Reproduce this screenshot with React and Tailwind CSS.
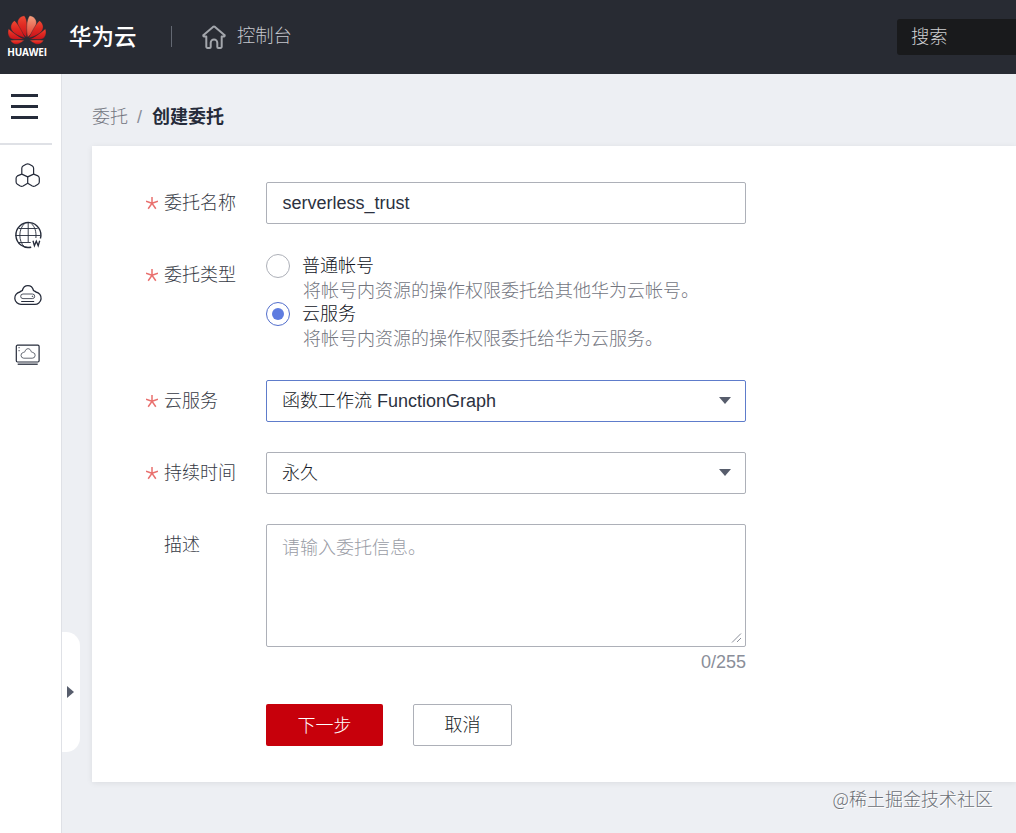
import React from "react";

const PETALS = [
  "M79 112C84 90 83 58 73 47C61 48 51 58 53 71C54 88 67 101 79 112Z",
  "M76 114C67 97 55 72 44 62C33 68 29 82 36 92C43 104 62 110 76 114Z",
  "M74 118C58 112 38 97 26 86C21 98 25 113 36 117C46 120 62 118 74 118Z",
  "M73 121C60 120 44 120 31 121C37 132 46 135 55 132C62 129 68 125 73 121Z",
];

function Logo() {
  return (
    <div className="flex w-[54px] shrink-0 flex-col items-center pt-[15px]">
      <svg width="40" height="30" viewBox="21 45 120 90">
        <defs>
          <linearGradient id="petal" x1="0" y1="0" x2="0" y2="1">
            <stop offset="0" stopColor="#ee4a35" />
            <stop offset="0.45" stopColor="#e02a22" />
            <stop offset="1" stopColor="#c9121b" />
          </linearGradient>
          <linearGradient id="petalLight" x1="0" y1="0" x2="0" y2="1">
            <stop offset="0" stopColor="#f3a080" />
            <stop offset="1" stopColor="#e23a2e" />
          </linearGradient>
        </defs>
        <g fill="url(#petal)" stroke="#282b33" strokeWidth="1.2">
          {PETALS.map((d) => <path key={d} d={d} />)}
        </g>
        <g fill="url(#petal)" stroke="#282b33" strokeWidth="1.2" transform="translate(162 0) scale(-1 1)">
          {PETALS.map((d, i) => <path key={d} d={d} fill={i === 0 ? "url(#petalLight)" : undefined} />)}
        </g>
      </svg>
      <span className="mt-[2px] font-['Open_Sans',sans-serif] text-[10px] leading-[11px] font-bold tracking-[-0.2px] text-white">HUAWEI</span>
    </div>
  );
}

function Header() {
  return (
    <header className="flex h-[74px] shrink-0 items-start bg-[#282b33]">
      <Logo />
      <span className="mt-[23px] ml-[15px] text-[22.5px] leading-[30px] font-medium text-white">华为云</span>
      <span className="mt-[26px] ml-[34px] h-[21px] w-px bg-[#636872]" />
      <svg className="mt-[24px] ml-[29px]" width="26" height="26" viewBox="0 0 26 26" fill="none" stroke="#a3a6ac" strokeWidth="2" strokeLinejoin="round" strokeLinecap="round">
        <path d="M5.3 12.5H3.2a.9.9 0 0 1-.6-1.6L12 2.9a1.6 1.6 0 0 1 2 0l9.4 8a.9.9 0 0 1-.6 1.6h-2.1v10.3a1.2 1.2 0 0 1-1.2 1.2h-2.2a1 1 0 0 1-1-1v-4.2a3.3 3.3 0 0 0-6.6 0V23a1 1 0 0 1-1 1H6.5a1.2 1.2 0 0 1-1.2-1.2z" />
      </svg>
      <span className="mt-[21px] ml-[10.5px] text-[18.3px] leading-[30px] font-light text-[#c4c6cc]">控制台</span>
      <div className="mt-[19px] ml-auto flex h-[36px] w-[119px] items-center rounded-l-[3px] bg-[#191a1c] pl-[14px] text-[18.3px] font-light text-[#cfd0d2]">搜索</div>
    </header>
  );
}

function Sidebar() {
  return (
    <aside className="w-[62px] shrink-0 border-r border-[#dfe1e6] bg-white">
      <div className="flex h-[71px] w-[52px] flex-col gap-[8px] border-b-2 border-[#dfe1e6] pt-[20px] pl-[11px]">
        <span className="h-[3px] w-[27px] bg-[#252b3a]" />
        <span className="h-[3px] w-[27px] bg-[#252b3a]" />
        <span className="h-[3px] w-[27px] bg-[#252b3a]" />
      </div>
      <nav className="flex flex-col items-center gap-[30px] pt-[15px] pr-[6px]">
        <svg width="30" height="30" viewBox="0.3 -0.9 30 30" fill="none" stroke="#252b3a" strokeWidth="1.2" strokeLinejoin="round">
          <path d="M13.4 3.4Q15 2.6 16.6 3.4L19.7 5.2Q20.9 6 20.9 7.4V13.2L15 16L9.1 13.2V7.4Q9.1 6 10.3 5.2Z" />
          <path d="M9.1 13.2L4.7 15Q3.4 15.8 3.4 17.3V21.2Q3.4 22.7 4.7 23.4L7.6 25.1Q9 25.8 10.4 25.1L15 22.4V16" />
          <path d="M20.9 13.2L25.3 15Q26.6 15.8 26.6 17.3V21.2Q26.6 22.7 25.3 23.4L22.4 25.1Q21 25.8 19.6 25.1L15 22.4" />
        </svg>
        <svg width="30" height="30" viewBox="0.3 0 30 30" fill="none" stroke="#252b3a" strokeWidth="0.9">
          <path d="M18.5 27.2A12.5 12.5 0 1 1 27.7 18.5" strokeWidth="1.4" />
          <path d="M2.7 15.5H27.8M15.5 2.8V22M6 8.5H25M6 22.5H18" />
          <path d="M12 3.5C5.5 9 5.5 21.5 12 27M18.5 3.5C22.5 7 23.7 12 23.2 18M12 27Q15 28 18 27.2" />
          <path d="M20.3 20.8l1.4 5 1.9-4.6 1.9 4.6 1.5-5" strokeWidth="1.3" />
        </svg>
        <svg width="30" height="30" viewBox="0.3 0 30 30" fill="none" stroke="#252b3a" strokeWidth="1.3">
          <path d="M8.5 24.3h13.2a6.2 6.2 0 0 0 1.5-12.3C22.2 10.8 21.3 10.9 20.8 10.5C20 7.5 18 5.7 15.2 5.7S10.4 7.5 9.6 10.5C9 10.9 8 11 7.2 12A6.2 6.2 0 0 0 8.5 24.3Z" />
          <rect x="8" y="14" width="14" height="4.6" rx="2.3" strokeWidth="0.8" />
          <path d="M8.5 21.5h13" strokeWidth="1" />
          <circle cx="19.8" cy="16.3" r="0.3" strokeWidth="1" />
        </svg>
        <svg width="30" height="30" viewBox="0.3 0.3 30 30" fill="none" stroke="#252b3a" strokeWidth="1.2">
          <rect x="3.6" y="5.5" width="22.8" height="16.8" rx="1.2" />
          <path d="M5 24.5h20" strokeWidth="1.3" />
          <path d="M11 18.5h8.5a2.9 2.9 0 0 0 .8-5.7C19.4 12.5 18.5 12.5 18.3 11.5C17.8 10 16.9 9 15.4 9s-2.5 1-3 2.5c-.2 1-1.1 1-1.9 1.3A2.9 2.9 0 0 0 11 18.5Z" strokeWidth="0.7" />
          <path d="M5.8 8h1.2M5.8 11h1.2" strokeWidth="0.9" />
        </svg>
      </nav>
    </aside>
  );
}

function Row({ label, required, children }) {
  return (
    <div className="flex">
      <div className="flex h-[42px] w-[120px] shrink-0 items-center">
        <span className="flex w-[18px]">
          {required && (
            <svg width="12" height="13" viewBox="0 0.5 12 13" stroke="#e9706e" strokeWidth="1.5">
              <path d="M6 .6V6.8M0 4.7L6 6.8M12 4.7L6 6.8M2.2 12.2L6 6.8L9.8 12.2" fill="none" />
            </svg>
          )}
        </span>
        <span className="font-light text-[#363a45]">{label}</span>
      </div>
      <div className="w-[480px]">{children}</div>
    </div>
  );
}

function Select({ value, suffix, active }) {
  return (
    <div className={`flex h-[42px] items-center justify-between rounded-[2px] border pr-[14px] pl-[15px] ${active ? "border-[#5e7ccb]" : "border-[#adb0b8]"}`}>
      <span className="font-light text-[#181c28]">
        {value}
        {suffix && <span className="text-[#2b3140]"> {suffix}</span>}
      </span>
      <svg className="mb-[2px]" width="12" height="7" viewBox="0 0 12 7" fill="#575d6c"><path d="M0 0h12L6 7z" /></svg>
    </div>
  );
}

function Radio({ label, hint, checked }) {
  return (
    <div className="flex h-[48px]">
      <span className={`flex size-[24px] shrink-0 items-center justify-center rounded-full border ${checked ? "border-[#526ecc]" : "border-[#adb0b8]"}`}>
        {checked && <span className="size-[12px] rounded-full bg-[#5e7ce0]" />}
      </span>
      <div className="ml-[12px] font-light">
        <div className="h-[24px] leading-[25px] text-[#10131c]">{label}</div>
        <div className="pl-px leading-[27px] text-[#72757e]">{hint}</div>
      </div>
    </div>
  );
}

export default function App() {
  return (
    <div className="flex h-[833px] w-[1016px] flex-col overflow-hidden bg-[#edeff3] font-['Liberation_Sans','Noto_Sans_CJK_SC',sans-serif] text-[18px] leading-[26px]">
      <Header />
      <div className="flex min-h-0 flex-1">
        <Sidebar />
        <div className="flex w-[18px] shrink-0 flex-col pt-[558px]">
          <button aria-label="展开" className="flex h-[120px] w-[18px] items-center rounded-r-[14px] bg-white pl-[5px]">
            <svg width="7" height="12" viewBox="0 0 7 12" fill="#575d6c"><path d="M0 0L7 6L0 12z" /></svg>
          </button>
        </div>
        <main className="flex min-w-0 flex-1 flex-col pl-[12px]">
          <div className="flex h-[72px] shrink-0 pt-[30px]">
            <span className="font-light text-[#72757e]">委托</span>
            <span className="ml-[9px] w-[15px] text-[#8a8e99]">/</span>
            <span className="font-bold text-[#252b3a]">创建委托</span>
          </div>
          <section className="flex h-[636px] shrink-0 flex-col gap-[30px] bg-white pt-[36px] pl-[54px] shadow-[0_1px_6px_rgba(0,0,0,0.08)]">
            <Row label="委托名称" required>
              <div className="flex h-[42px] items-center rounded-[2px] border border-[#adb0b8] pl-[15.5px] text-[#2b3140]">serverless_trust</div>
            </Row>
            <Row label="委托类型" required>
              <Radio label="普通帐号" hint="将帐号内资源的操作权限委托给其他华为云帐号。" />
              <Radio label="云服务" hint="将帐号内资源的操作权限委托给华为云服务。" checked />
            </Row>
            <Row label="云服务" required><Select value="函数工作流" suffix="FunctionGraph" active /></Row>
            <Row label="持续时间" required><Select value="永久" /></Row>
            <Row label="描述">
              <div className="flex h-[123px] justify-between rounded-[2px] border border-[#adb0b8] pt-[10px] pr-[3px] pb-[2px] pl-[15px]">
                <span className="font-light text-[#999ca5]">请输入委托信息。</span>
                <svg className="self-end" width="11" height="11" viewBox="0 0 11 11" stroke="#8a8e99" strokeWidth="1"><path d="M1 9.5L10 .5M6 9L10 5" /></svg>
              </div>
              <div className="h-[27px] pt-[2px] text-right text-[#8a8e99]">0/255</div>
            </Row>
            <div className="flex gap-[30px] pl-[120px] font-light">
              <button className="h-[42px] w-[117px] rounded-[2px] bg-[#c7000b] pt-px text-white">下一步</button>
              <button className="h-[42px] w-[99px] rounded-[2px] border border-[#adb0b8] text-[#181c28]">取消</button>
            </div>
          </section>
          <div className="mt-[3px] pr-[23px] text-right font-['Noto_Sans_CJK_SC',sans-serif] font-light text-[#6c6f76] [text-shadow:1px_1px_0_#fff]">@稀土掘金技术社区</div>
        </main>
      </div>
    </div>
  );
}
